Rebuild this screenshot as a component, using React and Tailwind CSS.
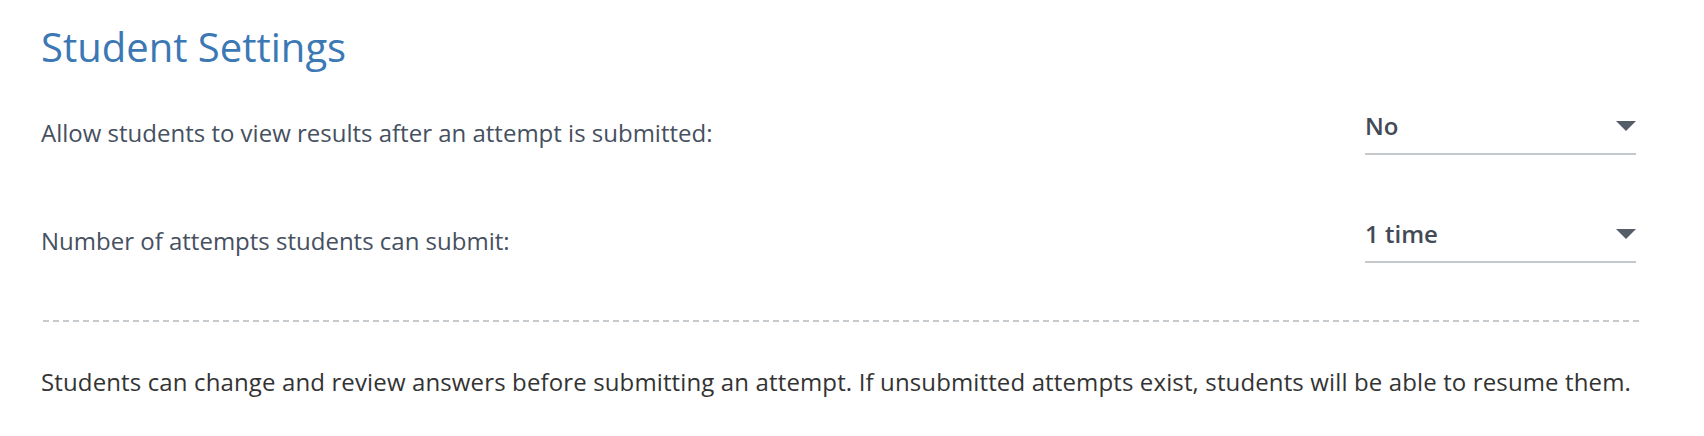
export default function App() {
  const rows = [
    { label: "Allow students to view results after an attempt is submitted:", value: "No" },
    { label: "Number of attempts students can submit:", value: "1 time" }
  ];

  return (
    <div className="w-full h-[436px] bg-white pl-[41px] pr-[63px] pt-[21px] font-['Open_Sans',sans-serif]">
      {/* Section title */}
      <h2 className="text-[40px] leading-[52px] text-[#3b78b4]">Student Settings</h2>

      {/* Setting rows */}
      <div className="mt-[37px] flex flex-col gap-[63px]">
        {rows.map((row) => (
          <div key={row.label} className="flex items-center justify-between">
            <span className="text-[24px] leading-[32px] text-[#465060] mt-[1px]">{row.label}</span>
            <div className="w-[271px] mr-[5px] flex items-center justify-between pb-[11px] border-b-2 border-[#c5c9cc]">
              <span className="text-[24px] leading-[32px] font-semibold text-[#434a56]">{row.value}</span>
              <svg width="20" height="10" viewBox="0 0 20 10" className="shrink-0">
                <polygon points="0,0 20,0 10,10" fill="#555d69" />
              </svg>
            </div>
          </div>
        ))}
      </div>

      {/* Dashed divider */}
      <div className="mt-[57px] h-[2px] bg-[linear-gradient(to_right,#c8cbce_6px,transparent_6px)] bg-[length:10px_2px] bg-repeat-x bg-[position:2px_0]" />

      <p className="mt-[44px] text-[24px] leading-[32px] tracking-[0.13px] text-[#333333]">
        Students can change and review answers before submitting an attempt. If unsubmitted attempts exist, students will be able to resume them.
      </p>
    </div>
  );
}
